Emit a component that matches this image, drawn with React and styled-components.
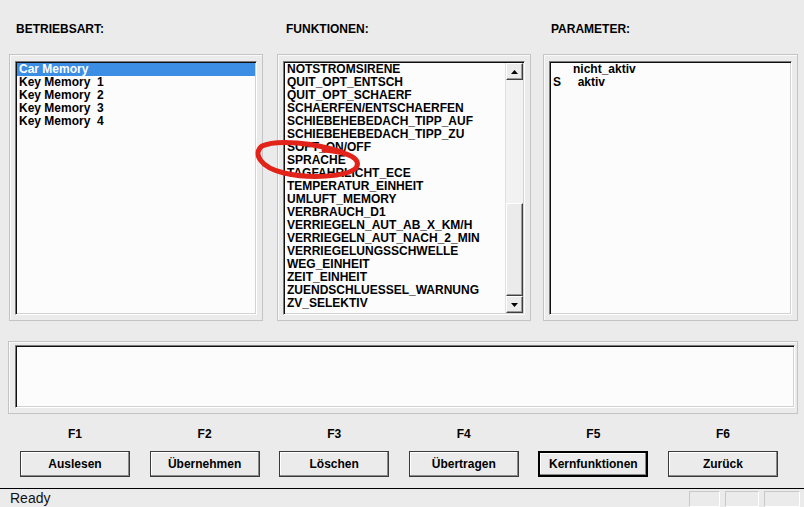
import styled, { createGlobalStyle } from "styled-components";

const GlobalStyle = createGlobalStyle`
  html, body {
    margin: 0;
    padding: 0;
    background: #ebebeb;
  }
`;

const Window = styled.div`
  position: relative;
  width: 804px;
  height: 507px;
  display: flex;
  flex-direction: column;
  background: #ebebeb;
  font-family: "Liberation Sans", Arial, sans-serif;
  color: #000;
  overflow: hidden;
`;

const Columns = styled.div`
  display: grid;
  grid-template-columns: 254px 256px 255px;
  column-gap: 12px;
  padding: 22px 0 0 9px;
`;

const Column = styled.div`
  display: flex;
  flex-direction: column;
  margin-left: ${(p) => p.$offset || 0}px;
`;

const Label = styled.div`
  height: 14px;
  line-height: 14px;
  font-size: 12px;
  font-weight: bold;
  padding-left: ${(p) => p.$indent || 7}px;
  margin-bottom: 18px;
`;

const Group = styled.div`
  box-sizing: border-box;
  height: ${(p) => p.$height}px;
  border: 1px solid #c4c4c4;
  box-shadow: inset 1px 1px #fafafa;
  padding: ${(p) => p.$pad || "6px 5px 5px 5px"};
  display: flex;
`;

const ListBox = styled.div`
  flex: 1;
  display: flex;
  background: #fcfcfc;
  border-top: 1px solid #7a7a7a;
  border-left: 1px solid #7a7a7a;
  border-right: 1px solid #fff;
  border-bottom: 1px solid #fff;
  box-shadow: inset 1px 1px #101010, inset -1px -1px #d2d2d2;
  padding: 1px;
`;

const Items = styled.div`
  flex: 1;
`;

const Row = styled.div`
  height: 13px;
  line-height: 13px;
  font-size: 12px;
  font-weight: bold;
  padding-left: 2px;
  white-space: pre;
  background: ${(p) => (p.$selected ? "#3b8ee4" : "transparent")};
  color: ${(p) => (p.$selected ? "#fff" : "#000")};
`;

const Scrollbar = styled.div`
  width: 17px;
  display: flex;
  flex-direction: column;
  background: #f2f2f2;
  border-left: 1px solid #e0e0e0;
`;

const ArrowButton = styled.div`
  box-sizing: border-box;
  height: 17px;
  display: flex;
  align-items: center;
  justify-content: center;
  background: #ebebeb;
  border-top: 1px solid #fff;
  border-left: 1px solid #fff;
  border-right: 1px solid #404040;
  border-bottom: 1px solid #404040;
  box-shadow: inset -1px -1px #9a9a9a;
`;

const Thumb = styled.div`
  box-sizing: border-box;
  margin-top: auto;
  height: ${(p) => p.$size}px;
  background: #ebebeb;
  border-top: 1px solid #fff;
  border-left: 1px solid #fff;
  border-right: 1px solid #404040;
  border-bottom: 1px solid #404040;
  box-shadow: inset -1px -1px #9a9a9a;
`;

const MessageGroup = styled(Group)`
  margin: 20px 6px 0 8px;
  padding: 3px 2px 5px 6px;
`;

const FKeys = styled.div`
  display: grid;
  grid-template-columns: repeat(6, 110px);
  column-gap: 19.6px;
  padding-left: 20px;
  margin-top: 13px;
`;

const FKey = styled.div`
  display: flex;
  flex-direction: column;
  align-items: center;
`;

const KeyLabel = styled.div`
  height: 14px;
  line-height: 14px;
  font-size: 12px;
  font-weight: bold;
  margin-bottom: 10px;
`;

const Button = styled.div`
  box-sizing: border-box;
  width: 110px;
  height: 26px;
  display: flex;
  align-items: center;
  justify-content: center;
  font-size: 12px;
  font-weight: bold;
  background: #ebebeb;
  border: ${(p) => (p.$default ? "2px solid #000" : "1px solid #3a3a3a")};
  box-shadow: inset -1px -1px #8a8a8a, inset 1px 1px #fff;
`;

const StatusBar = styled.div`
  margin-top: auto;
  height: 18px;
  border-top: 1px solid #000;
  display: flex;
  align-items: center;
  padding-left: 10px;
  padding-right: 4px;
  gap: 5px;
`;

const StatusText = styled.div`
  flex: 1;
  font-size: 14px;
  line-height: 16px;
  color: #111;
`;

const StatusPane = styled.div`
  box-sizing: border-box;
  width: ${(p) => p.$w}px;
  height: 16px;
  margin-top: 2px;
  border-top: 1px solid #c8c8c8;
  border-left: 1px solid #c8c8c8;
  border-right: 1px solid #fff;
  border-bottom: 1px solid #fff;
`;

// hand-drawn red mark over the list, lies on top of everything
const Annotation = styled.svg`
  position: absolute;
  left: 0;
  top: 0;
  width: 804px;
  height: 507px;
  pointer-events: none;
`;

const modes = ["Car Memory", "Key Memory  1", "Key Memory  2", "Key Memory  3", "Key Memory  4"];

const functions = [
  "NOTSTROMSIRENE",
  "QUIT_OPT_ENTSCH",
  "QUIT_OPT_SCHAERF",
  "SCHAERFEN/ENTSCHAERFEN",
  "SCHIEBEHEBEDACH_TIPP_AUF",
  "SCHIEBEHEBEDACH_TIPP_ZU",
  "SOFT_ON/OFF",
  "SPRACHE",
  "TAGFAHRLICHT_ECE",
  "TEMPERATUR_EINHEIT",
  "UMLUFT_MEMORY",
  "VERBRAUCH_D1",
  "VERRIEGELN_AUT_AB_X_KM/H",
  "VERRIEGELN_AUT_NACH_2_MIN",
  "VERRIEGELUNGSSCHWELLE",
  "WEG_EINHEIT",
  "ZEIT_EINHEIT",
  "ZUENDSCHLUESSEL_WARNUNG",
  "ZV_SELEKTIV",
];

const params = ["      nicht_aktiv", "S     aktiv"];

const buttons = [
  ["F1", "Auslesen"],
  ["F2", "Übernehmen"],
  ["F3", "Löschen"],
  ["F4", "Übertragen"],
  ["F5", "Kernfunktionen", true],
  ["F6", "Zurück"],
];

const Arrow = ({ down }) => (
  <svg width="7" height="4" viewBox="0 0 7 4">
    <polygon points={down ? "0,0 7,0 3.5,4" : "0,4 7,4 3.5,0"} fill="#000" />
  </svg>
);

const App = () => {
  return (
    <Window>
      <GlobalStyle />
      <Columns>
        <Column>
          <Label>BETRIEBSART:</Label>
          <Group $height={267}>
            <ListBox>
              <Items>
                {modes.map((m, i) => (
                  <Row key={m} $selected={i === 0}>{m}</Row>
                ))}
              </Items>
            </ListBox>
          </Group>
        </Column>
        <Column $offset={2}>
          <Label $indent={9}>FUNKTIONEN:</Label>
          <Group $height={267}>
            <ListBox>
              <Items>
                {functions.map((f) => (
                  <Row key={f}>{f}</Row>
                ))}
              </Items>
              <Scrollbar>
                <ArrowButton>
                  <Arrow />
                </ArrowButton>
                <Thumb $size={93} />
                <ArrowButton>
                  <Arrow down />
                </ArrowButton>
              </Scrollbar>
            </ListBox>
          </Group>
        </Column>
        <Column>
          <Label $indent={8}>PARAMETER:</Label>
          <Group $height={267}>
            <ListBox>
              <Items>
                {params.map((p) => (
                  <Row key={p}>{p}</Row>
                ))}
              </Items>
            </ListBox>
          </Group>
        </Column>
      </Columns>

      <MessageGroup $height={73}>
        <ListBox />
      </MessageGroup>

      <FKeys>
        {buttons.map(([key, text, def]) => (
          <FKey key={key}>
            <KeyLabel>{key}</KeyLabel>
            <Button $default={def}>{text}</Button>
          </FKey>
        ))}
      </FKeys>

      <StatusBar>
        <StatusText>Ready</StatusText>
        <StatusPane $w={31} />
        <StatusPane $w={34} />
        <StatusPane $w={36} />
      </StatusBar>

      <Annotation viewBox="0 0 804 507">
        <path
          d="M 342 152 C 314 143, 277 139, 262 146 C 253 153, 259 167, 284 173 C 310 179, 346 177, 356 168 C 362 159, 349 152, 324 150"
          fill="none"
          stroke="#e2231a"
          strokeWidth="5"
          strokeLinecap="round"
        />
      </Annotation>
    </Window>
  );
};

export default App;
